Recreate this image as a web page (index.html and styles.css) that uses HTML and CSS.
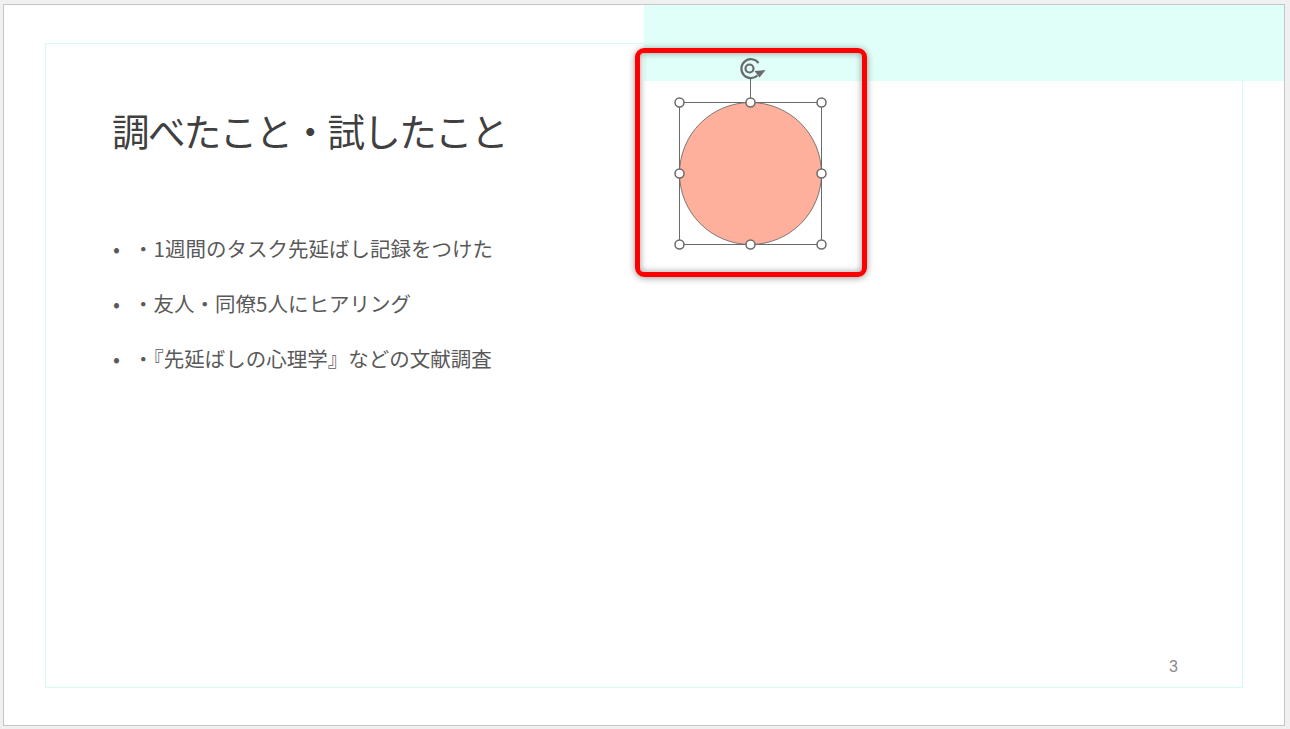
FILE: index.html
```html
<!DOCTYPE html>
<html lang="ja">
<head>
<meta charset="utf-8">
<title>調べたこと・試したこと</title>
<link rel="stylesheet" href="styles.css">
</head>
<body>
<div class="slide">
  <div class="frame">
    <h1 class="title">調べたこと・試したこと</h1>
    <ul class="bullets">
      <li>・1週間のタスク先延ばし記録をつけた</li>
      <li>・友人・同僚5人にヒアリング</li>
      <li>・『先延ばしの心理学』などの文献調査</li>
    </ul>
    <div class="pagenum">3</div>
  </div>
  <div class="band"></div>
  <svg class="shape" width="170" height="200" viewBox="666 55 170 200" aria-hidden="true">
    <circle cx="750.5" cy="173.5" r="71" fill="#ffb09c" stroke="#5e5e5e" stroke-width="0.8"/>
    <rect x="679.5" y="102.5" width="142" height="142" fill="none" stroke="#6a6a6a" stroke-width="1"/>
    <line x1="750.5" y1="78" x2="750.5" y2="98" stroke="#6a6a6a" stroke-width="1"/>
    <g fill="#fff" stroke="#6a6a6a" stroke-width="1.5">
      <circle cx="679.5" cy="102.5" r="4.5"/>
      <circle cx="750.5" cy="102.5" r="4.5"/>
      <circle cx="821.5" cy="102.5" r="4.5"/>
      <circle cx="679.5" cy="173.5" r="4.5"/>
      <circle cx="821.5" cy="173.5" r="4.5"/>
      <circle cx="679.5" cy="244.5" r="4.5"/>
      <circle cx="750.5" cy="244.5" r="4.5"/>
      <circle cx="821.5" cy="244.5" r="4.5"/>
    </g>
    <g fill="none" stroke="#6a6a6a" stroke-width="2.2">
      <path d="M758.5 63 A9.5 9.5 0 1 0 757.5 75.5"/>
      <circle cx="749.5" cy="68.5" r="4"/>
    </g>
    <path d="M754.5 71 L765.5 70 L759.5 77.5 Z" fill="#6a6a6a"/>
  </svg>
  <div class="highlight"></div>
</div>
</body>
</html>
```

FILE: styles.css
```css
html, body {
  margin: 0;
  padding: 0;
  background: #f0f0f0;
}

body {
  font-family: "Noto Sans CJK JP", "Noto Sans", sans-serif;
}

.slide {
  position: relative;
  margin: 4px 0 0 3px;
  width: 1280px;
  height: 720px;
  border: 1px solid #c6c6c6;
  background: #ffffff;
  overflow: hidden;
}

.frame {
  margin: 38px 0 0 41px;
  width: 1196px;
  height: 643px;
  border: 1px solid #d6fcf2;
  display: flex;
  flex-direction: column;
}

.title {
  margin: 61px 0 0 66px;
  font-size: 37.5px;
  font-weight: 400;
  line-height: 50px;
  color: #404040;
  letter-spacing: -1.6px;
}

.bullets {
  list-style: none;
  margin: 79px 0 0 67px;
  padding: 0;
  font-size: 20.5px;
  line-height: 28px;
  color: #595959;
}

.bullets li {
  position: relative;
  padding-left: 20px;
  margin-bottom: 27px;
}

.bullets li::before {
  content: "•";
  position: absolute;
  left: 0;
  top: 0;
  color: #595959;
}

.pagenum {
  margin-top: auto;
  align-self: flex-end;
  margin-right: 64px;
  margin-bottom: 10px;
  font-family: "Liberation Sans", sans-serif;
  font-size: 16px;
  line-height: 20px;
  color: #8a8a8a;
}

.band {
  position: absolute;
  left: 640px;
  top: 0;
  right: 0;
  height: 76px;
  background: #e0fff8;
}

.shape {
  position: absolute;
  left: 662px;
  top: 50px;
}

.highlight {
  position: absolute;
  left: 631px;
  top: 43px;
  width: 232px;
  height: 229px;
  box-sizing: border-box;
  border: 5px solid #ff0000;
  border-radius: 9px;
  box-shadow: 0 1px 7px rgba(0, 0, 0, 0.4), inset 0 0 7px rgba(0, 0, 0, 0.4);
}
```
